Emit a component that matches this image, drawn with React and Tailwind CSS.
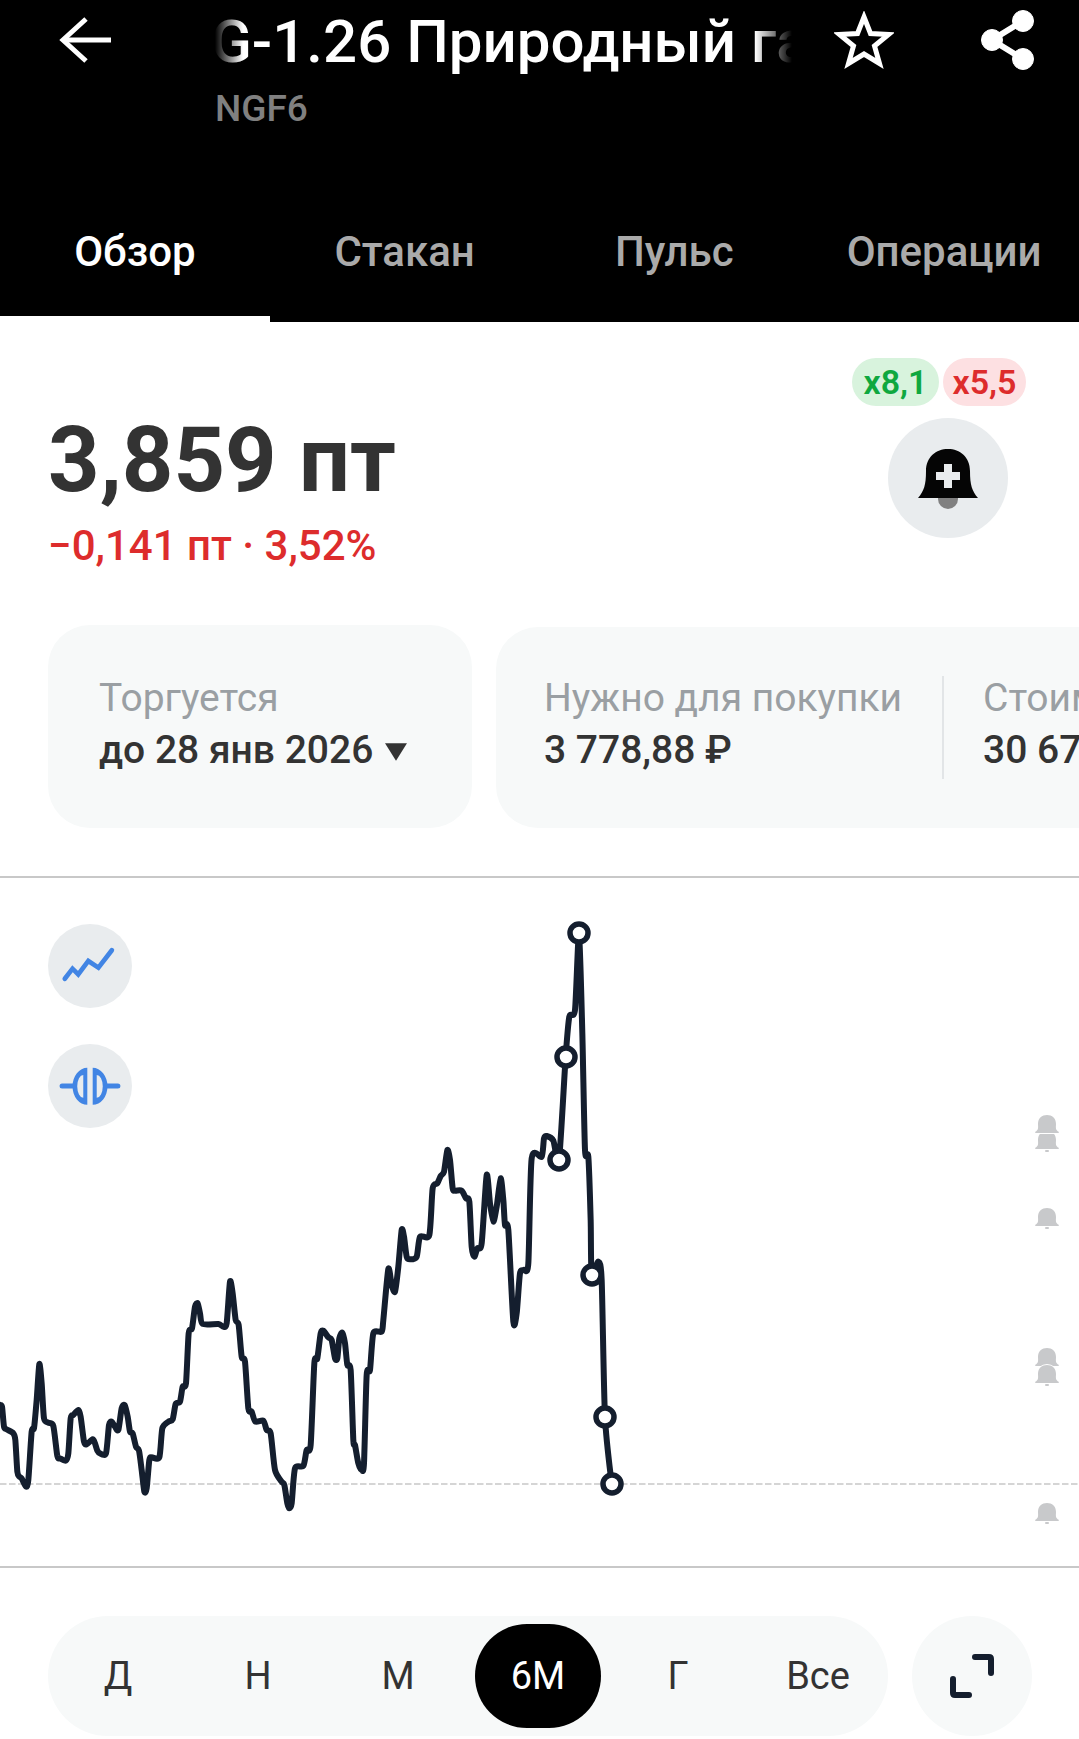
const left = [
  [0,915],[6,920],[12,980],[20,988],[40,1000],[46,1020],[52,1115],[58,1130],[65,1135],[78,1160],[85,1140],[95,995],[102,985],[110,900],[118,792],[125,850],[132,955],[145,968],[160,978],[172,1068],[180,1075],[197,1082],[205,1060],[212,955],[220,945],[235,930],[242,950],[252,1025],[260,1033],[278,1018],[285,1030],[292,1052],[300,1060],[318,1060],[327,975],[335,965],[345,980],[355,990],[365,925],[374,915],[383,950],[390,995],[398,1000],[408,1040],[417,1052],[425,1110],[433,1175],[440,1165],[448,1080],[455,1072],[478,1072],[487,985],[505,965],[518,958],[527,912],[540,905],[548,860],[558,850],[566,700],[576,685],[585,620],[593,610],[600,640],[608,672],[655,672],[670,680],[680,670],[690,545],[698,580],[707,660],[716,675],[725,770],[735,785],[745,925],[755,935],[766,965],[790,962],[800,990],[812,1000],[825,1110],[845,1145],[853,1155],[862,1210],[868,1225],[875,1210],[885,1105],[910,1098],[920,1050],[932,1035],[943,790],[952,775],[962,700],[970,692],[985,712],[995,720],[1005,775],[1012,775],[1018,715],[1027,698],[1035,730],[1042,795],[1052,810],[1060,1020],
].map(([x, y]) => [x / 3, 1100 + y / 3])

const middle = [
  [45,1035],[55,1090],[65,1110],[72,1090],[80,825],[90,810],[100,700],[125,695],[130,660],[145,507],[155,555],[165,575],[175,500],[185,390],[192,410],[200,470],[210,478],[230,470],[240,410],[268,405],[278,265],[292,250],[302,228],[312,215],[322,150],[330,180],[338,265],[345,272],[365,272],[378,295],[388,305],[395,440],[403,470],[412,445],[425,430],[440,225],[450,310],[460,365],[470,320],[482,235],[490,300],[495,375],[505,390],[520,665],[530,640],[540,520],[552,510],[565,490],[575,175],[605,170],[612,115],[620,108],[640,122],[657,180],
].map(([x, y]) => [340 + x / 3, 1100 + y / 3])

const spike = [
  [257,470],[268,350],[285,330],[297,100],[307,400],[315,750],[325,770],[332,960],
].map(([x, y]) => [480 + x / 3, 900 + y / 3])

const tail = [
  [755,525],[775,485],[785,540],[795,952],[815,1152],
].map(([x, y]) => [340 + x / 3, 1100 + y / 3])

const pts = [...left, ...middle, ...spike, ...tail]

// rounds the corners a little, the real chart line is a soft curve
const smoothPath = (p, k = 0.12) => {
  let d = `M${p[0][0]} ${p[0][1]}`
  for (let i = 0; i < p.length - 1; i++) {
    const a = p[i - 1] || p[i]
    const b = p[i]
    const c = p[i + 1]
    const e = p[i + 2] || c
    d += `C${b[0] + (c[0] - a[0]) * k} ${b[1] + (c[1] - a[1]) * k} ${c[0] - (e[0] - b[0]) * k} ${c[1] - (e[1] - b[1]) * k} ${c[0]} ${c[1]}`
  }
  return d
}

const markers = [
  [579, 933],
  [566, 1057],
  [559, 1160],
  [592, 1275],
  [605, 1417],
  [612, 1484],
]

const periods = ["Д", "Н", "М", "6М", "Г", "Все"]
const tabs = ["Обзор", "Стакан", "Пульс", "Операции"]

const SmallBell = ({ className }) => (
  <svg viewBox="0 0 28 24" className={`absolute right-[18px] w-[28px] h-[24px] ${className}`}>
    <path
      d="M2 19 C6 17 5 14 5 11 C5 5 9 2 14 2 C19 2 23 5 23 11 C23 14 22 17 26 19 Q26 20 25 20 H3 Q2 20 2 19 Z"
      fill="#c8c9cb"
      stroke="#ffffff"
      strokeWidth="2"
      paintOrder="stroke"
    />
    <rect x="12" y="21" width="4" height="2" rx="1" fill="#c8c9cb" />
  </svg>
)

export default function App() {
  return (
    <div className="w-[1079px] h-[1739px] overflow-hidden bg-white [font-family:Roboto,sans-serif]">
      <header className="h-[322px] bg-black flex flex-col">
        <div className="h-[190px] flex items-start">
          <svg viewBox="0 0 52 46" className="w-[52px] h-[46px] ml-[59px] mt-[17px] shrink-0" fill="none" stroke="#fff" strokeWidth="5">
            <path d="M52 23H4" />
            <path d="M27 2 4 23l23 21" />
          </svg>
          <div className="w-[577px] ml-[104px] shrink-0">
            <div className="overflow-hidden whitespace-nowrap text-white text-[60px] leading-[84px] font-medium [text-indent:-4px] [mask-image:linear-gradient(to_right,transparent,black_28px,black_540px,transparent)]">
              G-1.26 Природный газ
            </div>
            <div className="mt-[4px] text-[#808080] text-[37px] leading-[42px] font-medium">NGF6</div>
          </div>
          <svg viewBox="0 0 60 58" className="w-[60px] h-[58px] ml-[42px] mt-[11px] shrink-0" fill="none" stroke="#fff" strokeWidth="5">
            <path d="M30 6 36.5 22.5 54.5 23.5 40.5 35 45.5 52.5 30 43 14.5 52.5 19.5 35 5.5 23.5 23.5 22.5Z" />
          </svg>
          <svg viewBox="0 0 56 60" className="w-[56px] h-[60px] ml-[87px] mt-[10px] shrink-0" fill="#fff" stroke="#fff">
            <circle cx="42" cy="11" r="10.5" />
            <circle cx="11" cy="30" r="10.5" />
            <circle cx="42" cy="49" r="10.5" />
            <path d="M42 11 11 30 42 49" fill="none" strokeWidth="6" />
          </svg>
        </div>
        <div className="h-[132px] flex">
          {tabs.map((tab, i) => (
            <div
              key={tab}
              className={`flex-1 flex items-center justify-center pb-[4px] text-[42px] font-medium border-b-[6px] ${
                i === 0 ? "text-white border-white" : "text-[#aaaaaa] border-transparent"
              }`}
            >
              {tab}
            </div>
          ))}
        </div>
      </header>

      <section className="h-[303px] flex justify-between pl-[48px] pr-[53px]">
        <div className="pt-[94px]">
          <div className="text-[90px] leading-[90px] font-bold text-[#333333]">3,859 пт</div>
          <div className="mt-[18px] text-[42px] leading-[44px] font-medium text-[#dd2c2c]">−0,141 пт · 3,52%</div>
        </div>
        <div className="pt-[36px] flex flex-col items-end">
          <div className="flex gap-[4px] text-[34px] font-semibold">
            <span className="h-[48px] w-[87px] rounded-full bg-[#d8f3dd] text-[#0fa83f] flex items-center justify-center">x8,1</span>
            <span className="h-[48px] w-[83px] rounded-full bg-[#fde0e2] text-[#dd2c2c] flex items-center justify-center">x5,5</span>
          </div>
          <div className="mt-[12px] mr-[18px] w-[120px] h-[120px] rounded-full bg-[#e9ecee] flex items-center justify-center">
            <svg viewBox="0 0 60 60" className="w-[60px] h-[60px] mt-[1px]">
              <path d="M20 48h20v2a10 10 0 0 1-20 0Z" fill="#808080" />
              <path d="M0 49C6 42 8 36 8 22 8 8 18 0 30 0 42 0 52 8 52 22 52 36 54 42 60 49Z" fill="#050505" />
              <path d="M26 15h8v8h8v8h-8v8h-8v-8h-8v-8h8Z" fill="#e9ecee" />
            </svg>
          </div>
        </div>
      </section>

      <section className="h-[203px] flex gap-[24px] pl-[48px]">
        <div className="w-[424px] shrink-0 rounded-[42px] bg-[#f7f9f9] pl-[51px] pt-[51px]">
          <div className="text-[39px] leading-[44px] text-[#9a9fa3]">Торгуется</div>
          <div className="mt-[8px] flex items-center text-[39px] leading-[44px] font-medium text-[#333333]">
            до 28 янв 2026
            <svg viewBox="0 0 20 17" className="w-[22px] h-[19px] ml-[12px] mt-[2px]">
              <path d="M0 1h20L10 17Z" fill="#333333" />
            </svg>
          </div>
        </div>
        <div className="w-[700px] shrink-0 mt-[2px] rounded-l-[42px] bg-[#f7f9f9] pl-[48px] pt-[49px] flex">
          <div className="w-[398px] shrink-0">
            <div className="text-[39px] leading-[44px] text-[#9a9fa3] whitespace-nowrap">Нужно для покупки</div>
            <div className="mt-[8px] text-[39px] leading-[44px] font-medium text-[#333333] whitespace-nowrap">3 778,88 ₽</div>
          </div>
          <div className="w-[2px] h-[103px] bg-[#e2e5e7] shrink-0" />
          <div className="ml-[39px]">
            <div className="text-[39px] leading-[44px] text-[#9a9fa3] whitespace-nowrap">Стоимость</div>
            <div className="mt-[8px] text-[39px] leading-[44px] font-medium text-[#333333] whitespace-nowrap">30 675,00 ₽</div>
          </div>
        </div>
      </section>

      <section className="mt-[48px] h-[692px] relative border-y-2 border-[#c8c8c8]">
        <svg viewBox="0 878 1079 688" className="absolute inset-0 w-full h-full" fill="none">
          <path d="M0 1484H1079" stroke="#c8c8c8" strokeWidth="1.5" strokeDasharray="6.5 2.5" />
          <path d={smoothPath(pts)} stroke="#141e2e" strokeWidth="6" strokeLinejoin="round" strokeLinecap="round" />
          {markers.map(([x, y]) => (
            <circle key={y} cx={x} cy={y} r="9" fill="#fff" stroke="#141e2e" strokeWidth="5.5" />
          ))}
        </svg>

        <div className="absolute left-[48px] top-[46px] flex flex-col gap-[36px]">
          <div className="w-[84px] h-[84px] rounded-full bg-[#e9ecee]">
            <svg viewBox="0 0 250 250" className="w-full h-full" fill="none" stroke="#4285e4" strokeWidth="14" strokeLinecap="round">
              <path d="M50 163 73 133 90 150 120 110 150 130 190 78" />
            </svg>
          </div>
          <div className="w-[84px] h-[84px] rounded-full bg-[#e9ecee]">
            <svg viewBox="0 0 250 250" className="w-full h-full" fill="#4285e4">
              <path fillRule="evenodd" d="M117 71A44 55 0 0 0 117 181ZM105 92V160A18 34 0 0 1 105 92Z" />
              <path fillRule="evenodd" d="M133 71A44 55 0 0 1 133 181ZM145 92V160A18 34 0 0 0 145 92Z" />
              <path d="M42 125H75M175 125H208" stroke="#4285e4" strokeWidth="15" strokeLinecap="round" />
            </svg>
          </div>
        </div>

        <SmallBell className="top-[251px]" />
        <SmallBell className="top-[235px]" />
        <SmallBell className="top-[328px]" />
        <SmallBell className="top-[468px]" />
        <SmallBell className="top-[485px]" />
        <SmallBell className="top-[623px]" />
      </section>

      <section className="mt-[48px] flex gap-[24px] pl-[48px]">
        <div className="w-[840px] h-[120px] rounded-full bg-[#f7f9f9] flex items-center">
          {periods.map((period) => (
            <div key={period} className="flex-1 flex justify-center">
              <div
                className={`w-[126px] h-[104px] rounded-full flex items-center justify-center text-[38px] ${
                  period === "6М" ? "bg-black text-white" : "text-[#333333]"
                }`}
              >
                {period}
              </div>
            </div>
          ))}
        </div>
        <div className="w-[120px] h-[120px] rounded-full bg-[#f7f9f9] flex items-center justify-center">
          <svg viewBox="0 0 46 46" className="w-[46px] h-[46px]" fill="none" stroke="#141e2e" strokeWidth="6" strokeLinecap="round" strokeLinejoin="round">
            <path d="M26 4H40Q42 4 42 6V20" />
            <path d="M4 26V40Q4 42 6 42H20" />
          </svg>
        </div>
      </section>
    </div>
  )
}
